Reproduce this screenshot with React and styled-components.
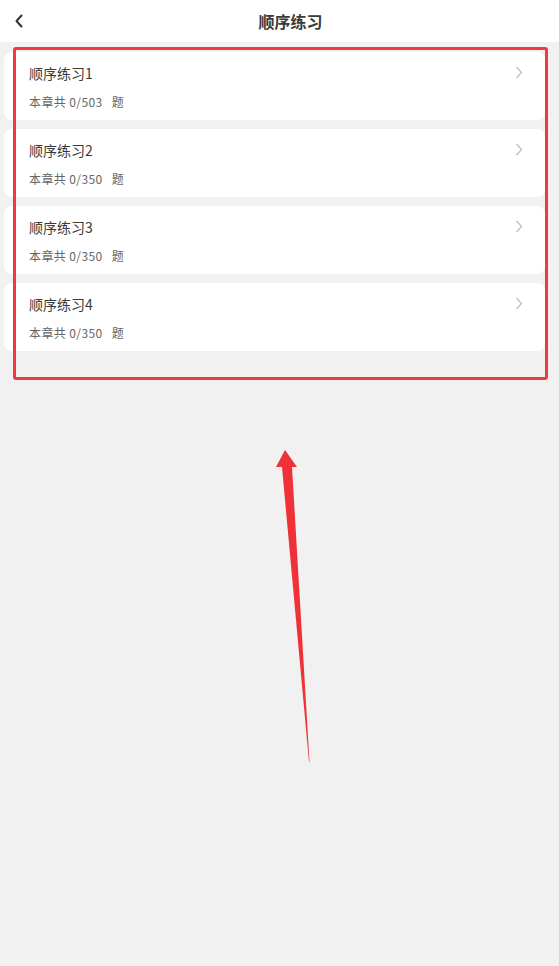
import React from "react";
import styled, { createGlobalStyle } from "styled-components";

const Global = createGlobalStyle`
  html, body { margin: 0; padding: 0; background: #f1f1f1; }
  body { font-family: "Noto Sans CJK SC", "Noto Sans", sans-serif; }
`;

const Page = styled.div`
  position: relative;
  width: 559px;
  height: 966px;
  background: #f1f1f1;
  overflow: hidden;
`;

const Header = styled.header`
  height: 42px;
  background: #fff;
  display: grid;
  grid-template-columns: 40px 1fr 40px;
  align-items: center;
`;

const Back = styled.button`
  border: 0;
  background: none;
  padding: 0 0 0 14px;
  display: flex;
  align-items: center;
  height: 42px;
`;

const Title = styled.h1`
  margin: 0;
  font-size: 16px;
  font-weight: 700;
  color: #3a3a3a;
  text-align: center;
  padding-left: 22px;
`;

const List = styled.div`
  display: flex;
  flex-direction: column;
  gap: 9px;
  padding: 10px 14px 0 4px;
`;

const Card = styled.div`
  position: relative;
  height: 68px;
  background: #fff;
  border-radius: 8px;
  padding: 11px 0 0 25px;
  box-sizing: border-box;
`;

const CardTitle = styled.div`
  font-size: 14px;
  line-height: 20px;
  color: #3a3a3a;
`;

const CardSub = styled.div`
  margin-top: 10px;
  font-size: 12px;
  line-height: 17px;
  color: #666;
  display: flex;
  gap: 9px;
`;

const Count = styled.span`
  letter-spacing: 0.4px;
`;

const Chevron = styled.svg`
  position: absolute;
  right: 22px;
  top: 14px;
`;

const Highlight = styled.div`
  position: absolute;
  left: 13px;
  top: 47px;
  width: 535px;
  height: 333px;
  box-sizing: border-box;
  border: 3px solid #ef3b3f;
  border-radius: 3px;
  pointer-events: none;
`;

const Arrow = styled.svg`
  position: absolute;
  left: 0;
  top: 0;
  pointer-events: none;
`;

const items = [
  { name: "顺序练习1", total: 503 },
  { name: "顺序练习2", total: 350 },
  { name: "顺序练习3", total: 350 },
  { name: "顺序练习4", total: 350 },
];

export default function App() {
  return (
    <>
      <Global />
      <Page>
        <Header>
          <Back aria-label="back">
            <svg width="10" height="14" viewBox="0 0 10 14">
              <path d="M7.5 1.5 L2.5 7 L7.5 12.5" fill="none" stroke="#333" strokeWidth="2" strokeLinecap="round" strokeLinejoin="round" />
            </svg>
          </Back>
          <Title>顺序练习</Title>
          <span />
        </Header>
        <List>
          {items.map((it) => (
            <Card key={it.name}>
              <CardTitle>{it.name}</CardTitle>
              <CardSub>
                <Count>本章共 0/{it.total}</Count>
                <span>题</span>
              </CardSub>
              <Chevron width="8" height="13" viewBox="0 0 8 13">
                <path d="M1.5 1 L6.5 6.5 L1.5 12" fill="none" stroke="#bbb" strokeWidth="1.2" />
              </Chevron>
            </Card>
          ))}
        </List>
        <Highlight />
        <Arrow width="559" height="966" viewBox="0 0 559 966">
          <polygon
            points="285,450 297,467 292,467 309.5,762 309,762 282,467 276,467"
            fill="#ee3237"
          />
        </Arrow>
      </Page>
    </>
  );
}
